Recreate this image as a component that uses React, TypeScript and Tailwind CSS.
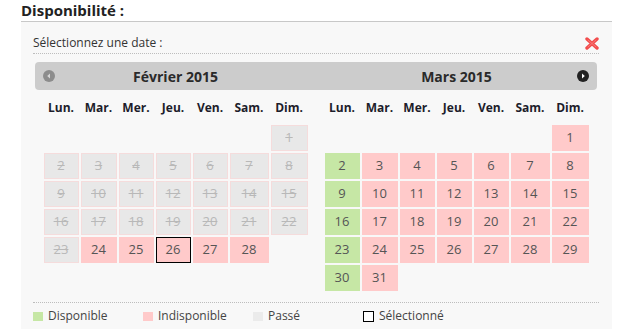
import React from "react";

type Kind = "past" | "off" | "free" | "blank";

interface Day {
  n: number;
  kind: Kind;
  selected?: boolean;
}

const COLS = "grid grid-cols-[35px_36px_35px_35px_35px_39px_37px] gap-[2px]";
const DAY_NAMES = ["Lun.", "Mar.", "Mer.", "Jeu.", "Ven.", "Sam.", "Dim."];

function blanks(count: number): Day[] {
  return Array.from({ length: count }, () => ({ n: 0, kind: "blank" as Kind }));
}

// Février 2015 : tout est passé jusqu'au 23
const february: Day[] = [
  ...blanks(6),
  ...Array.from({ length: 28 }, (_, i) => {
    const n = i + 1;
    return { n, kind: (n <= 23 ? "past" : "off") as Kind, selected: n === 26 };
  }),
];

// Mars 2015 : les lundis sont disponibles
const march: Day[] = [
  ...blanks(6),
  ...Array.from({ length: 31 }, (_, i) => {
    const n = i + 1;
    return { n, kind: ((n - 2) % 7 === 0 ? "free" : "off") as Kind };
  }),
];

function Cell({ day }: { day: Day }) {
  if (day.kind === "blank") return <div className="h-[26px]" />;

  const base = "h-[26px] flex items-center justify-center text-[13px]";
  if (day.kind === "past") {
    return (
      <div className={`${base} bg-[#e8e8e8] border border-[#f5dcdc] text-[#b8b8b8] line-through`}>
        {day.n}
      </div>
    );
  }
  const bg = day.kind === "free" ? "bg-[#c6e7a5]" : "bg-[#ffcaca]";
  return (
    <div
      className={`${base} ${bg} text-[#555] ${day.selected ? "border border-black" : ""}`}
    >
      {day.n}
    </div>
  );
}

function Month({ days }: { days: Day[] }) {
  return (
    <div className="w-[281px] flex justify-center">
      <div>
        <div className={`${COLS} h-[35px]`}>
          {DAY_NAMES.map((d) => (
            <div
              key={d}
              className="flex items-center justify-center text-[12px] font-bold text-[#1d1d2b]"
            >
              {d}
            </div>
          ))}
        </div>
        <div className={COLS}>
          {days.map((day, i) => (
            <Cell key={i} day={day} />
          ))}
        </div>
      </div>
    </div>
  );
}

function CloseIcon() {
  return (
    <svg width="14" height="13" viewBox="0 0 14 13">
      <path d="M2 2 L12 11 M12 2 L2 11" stroke="#f24b4b" strokeWidth="3.4" strokeLinecap="round" />
      <path d="M3 3 L11 10 M11 3 L3 10" stroke="#f87878" strokeWidth="1" strokeLinecap="round" />
    </svg>
  );
}

function Arrow({ dir }: { dir: "prev" | "next" }) {
  const prev = dir === "prev";
  return (
    <svg width="12" height="12" viewBox="0 0 12 12">
      <circle cx="6" cy="6" r="6" fill={prev ? "#8c8c8c" : "#222"} />
      {prev ? (
        <path d="M7 3.5 L4.2 6 L7 8.5 Z" fill="#d6d6d6" />
      ) : (
        <path d="M5 3.5 L7.8 6 L5 8.5 Z" fill="#fff" />
      )}
    </svg>
  );
}

function LegendItem({ swatch, label }: { swatch: string; label: string }) {
  return (
    <div className="w-[110px] flex items-center gap-[5px]">
      <span className={swatch} />
      <span className="text-[12px] leading-[16px] text-[#444]">{label}</span>
    </div>
  );
}

export default function App() {
  return (
    <div className="w-[619px] h-[329px] bg-white overflow-hidden font-['Open_Sans',sans-serif]">
      <div className="ml-[21px] w-[591px]">
        <h2 className="text-[15px] font-bold leading-[21px] text-[#222]">Disponibilité :</h2>

        <div className="border-t border-[#c8c8c8] bg-[#f8f8f8] pl-[12px] pr-[13px] h-[310px]">
          {/* en-tête */}
          <div className="flex items-center justify-between pt-[13px] pb-[2px] border-b border-dotted border-[#bdbdbd]">
            <span className="text-[12px] leading-[16px] text-[#333]">Sélectionnez une date :</span>
            <CloseIcon />
          </div>

          {/* barre des mois */}
          <div className="relative mx-[2px] mt-[8px] h-[28px] rounded-[4px] bg-[#cccccc] flex items-center">
            <span className="absolute left-[8px] top-[8px] flex">
              <Arrow dir="prev" />
            </span>
            <div className="w-[281px] text-center text-[14px] font-bold text-[#2a2a2a]">Février 2015</div>
            <div className="w-[281px] text-center text-[14px] font-bold text-[#2a2a2a]">Mars 2015</div>
            <span className="absolute right-[8px] top-[8px] flex">
              <Arrow dir="next" />
            </span>
          </div>

          {/* calendriers */}
          <div className="mx-[2px] flex h-[201px]">
            <Month days={february} />
            <Month days={march} />
          </div>

          {/* légende */}
          <div className="mt-[11px] border-t border-dotted border-[#bdbdbd] pt-[5px] flex">
            <LegendItem swatch="w-[10px] h-[9px] bg-[#c6e7a5]" label="Disponible" />
            <LegendItem swatch="w-[10px] h-[9px] bg-[#ffcaca]" label="Indisponible" />
            <LegendItem swatch="w-[10px] h-[9px] bg-[#ebebeb]" label="Passé" />
            <LegendItem swatch="w-[11px] h-[11px] bg-white border border-black" label="Sélectionné" />
          </div>
        </div>
      </div>
    </div>
  );
}
